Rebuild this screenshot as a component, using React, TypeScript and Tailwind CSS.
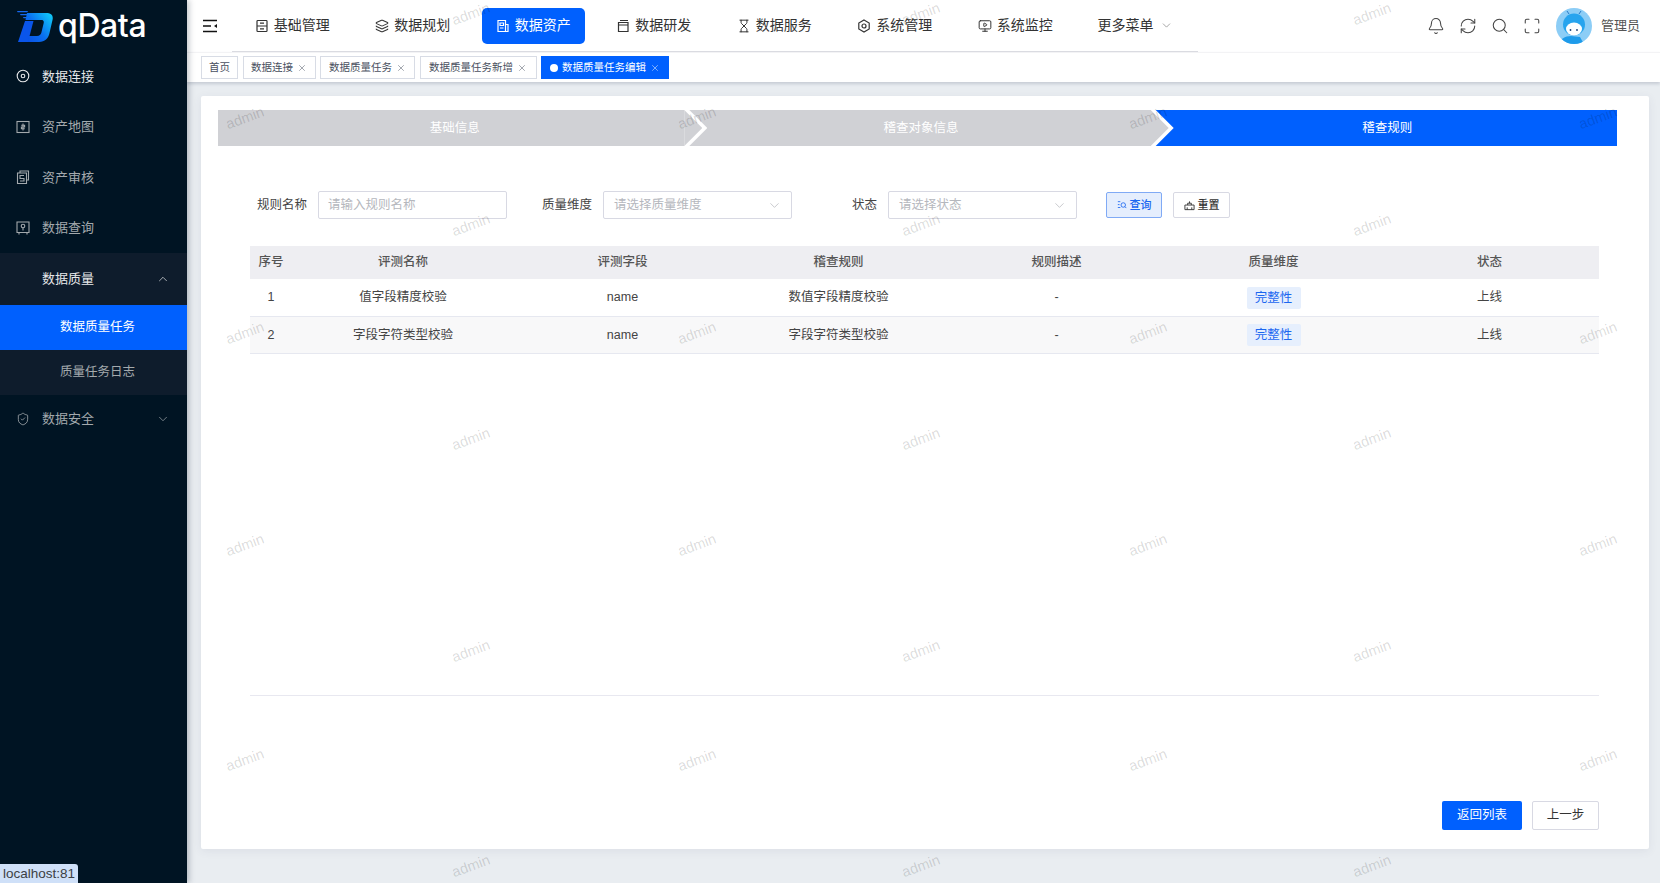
import {
  Bell,
  RefreshCw,
  Search,
  Maximize,
  ChevronDown,
  ChevronUp,
  X,
  Layers,
  Hourglass,
  MonitorPlay,
  ShieldCheck,
} from 'lucide-react';

const font = "font-['Liberation_Sans','Noto_Sans_CJK_SC',sans-serif]";

const navItems = [
  { label: '基础管理', icon: 'base' },
  { label: '数据规划', icon: 'layers' },
  { label: '数据资产', icon: 'doc', active: true },
  { label: '数据研发', icon: 'panel' },
  { label: '数据服务', icon: 'hourglass' },
  { label: '系统管理', icon: 'hexagon' },
  { label: '系统监控', icon: 'monitor' },
];

const tags = [
  { label: '首页', width: 'w-[37px]' },
  { label: '数据连接', width: 'w-[73px]', close: true },
  { label: '数据质量任务', width: 'w-[95px]', close: true },
  { label: '数据质量任务新增', width: 'w-[117px]', close: true },
];

const rows = [
  { id: 1, name: '值字段精度校验', field: 'name', rule: '数值字段精度校验', height: 'h-[38px]' },
  { id: 2, name: '字段字符类型校验', field: 'name', rule: '字段字符类型校验', height: 'h-[37px] bg-[#f8f8f9]' },
];

// watermark centres, staggered
const marks: { x: number; y: number }[] = [];
[118, 333, 545, 760].forEach((y) => [245, 697, 1148, 1598].forEach((x) => marks.push({ x, y })));
[14, 225, 439, 651, 866].forEach((y) => [471, 921, 1372].forEach((x) => marks.push({ x, y })));

function NavIcon({ name }: { name: string }) {
  const cls = 'w-[14px] h-[14px] shrink-0';
  if (name === 'layers') return <Layers className={cls} strokeWidth={1.8} />;
  if (name === 'hourglass') return <Hourglass className={cls} strokeWidth={1.7} />;
  if (name === 'monitor') return <MonitorPlay className={cls} strokeWidth={1.7} />;
  return (
    <svg viewBox="0 0 14 14" fill="none" stroke="currentColor" strokeWidth="1.2" className={cls}>
      {name === 'base' && <rect x="2" y="1.500" width="10" height="11" rx="0.800" />}
      {name === 'base' && <path d="M2 7h10M5 4.200h4M5 9.800h4" />}
      {name === 'doc' && <path d="M2 1.500h7.500v11H2zM9.500 5.500h2.500v7H2M4 4h3.500v2.500H4zM4 9h3.500" />}
      {name === 'panel' && <path d="M2.500 3.500h9.500v9H2.500zM2.500 6h9.500M4 1.500h8" />}
      {name === 'hexagon' && <path d="M7 1l5.200 3v6L7 13l-5.200-3V4z" />}
      {name === 'hexagon' && <circle cx="7" cy="7" r="2" />}
    </svg>
  );
}

function SideIcon({ kind }: { kind: string }) {
  return (
    <svg viewBox="0 0 14 14" fill="none" stroke="currentColor" strokeWidth="1.100" className="w-[14px] h-[14px] shrink-0">
      {kind === 'link' && <circle cx="7" cy="7" r="5.800" />}
      {kind === 'link' && <circle cx="7" cy="7" r="1.800" />}
      {kind === 'map' && <rect x="1" y="1.500" width="12" height="11" />}
      {kind === 'map' && <path d="M7 3.500v7M5.200 5.300h3.400v1.700H5.400v1.800h3.400" />}
      {kind === 'audit' && <path d="M4 3V1h8.500v9H10.500M1.500 3H10.500v10.500H1.500z" />}
      {kind === 'audit' && <path d="M8 5.500H4v3h4v2.500H4" />}
      {kind === 'query' && <path d="M1 1h12v10.500H1zM3 11.500V13.500M11 11.500V13.500" />}
      {kind === 'query' && <circle cx="7" cy="5" r="1.800" />}
      {kind === 'query' && <path d="M7 6.800V9.500" />}
    </svg>
  );
}

function Logo() {
  return (
    <svg viewBox="0 0 36 32" className="w-[36px] h-[32px] shrink-0">
      <defs>
        <linearGradient id="logoFill" x1="0" y1="1" x2="1" y2="0.2">
          <stop offset="0" stopColor="#0a4fe4" />
          <stop offset="0.5" stopColor="#0a6ff0" />
          <stop offset="1" stopColor="#10c4f8" />
        </linearGradient>
      </defs>
      <path d="M0 1h11l-.6 1.300H.6zM3 4h9l-.6 1.300H3.600zM6 7h6l-.6 1.300H6.600z" fill="#1668f0" />
      <path
        d="M10 3h19c5.500 0 7.500 2.500 6.500 7l-3 13c-1.200 5.500-4.500 9-10.500 9H10l2-6h8c2.500 0 3.800-1.200 4.400-3.500l2.200-9c.6-2.500-.2-3.500-2.500-3.500H8.500z"
        fill="url(#logoFill)"
      />
      <path d="M8 11h8.500L11 32H1z" fill="#0a55ea" />
    </svg>
  );
}

function Avatar() {
  return (
    <svg viewBox="0 0 36 36" className="w-[36px] h-[36px] rounded-full shrink-0">
      <rect width="36" height="36" fill="#8ccdf6" />
      <path d="M3 36c1-5 6-8 12-8l9 1 4 7z" fill="#1e9bea" />
      <ellipse cx="18" cy="16.500" rx="11" ry="11" fill="#27a4ee" />
      <ellipse cx="18" cy="21" rx="8" ry="6.500" fill="#fff" />
      <circle cx="14.500" cy="22" r="0.900" fill="#1d3f73" />
      <circle cx="21" cy="22" r="0.900" fill="#1d3f73" />
      <path d="M13 6l-2-3M23 6l2-3" stroke="#1d6fc0" strokeWidth="0.900" fill="none" />
    </svg>
  );
}

function Sidebar() {
  const item = 'flex items-center h-[50.5px] pl-[16px] pr-[17px] text-[13px] text-[#a3a9ad]';
  return (
    <aside className="w-[187px] shrink-0 bg-[#001423] flex flex-col z-20 shadow-[2px_0_6px_rgba(0,21,41,0.25)]">
      <div className="h-[51px] flex items-center pl-[17px] gap-[5px]">
        <Logo />
        <span className="font-['Inter','Liberation_Sans',sans-serif] font-medium text-[32px] tracking-[-0.4px] leading-none text-white">qData</span>
      </div>
      <div className={`${item} gap-[12px] text-[#e6e8ea]`}>
        <SideIcon kind="link" />
        数据连接
      </div>
      <div className={`${item} gap-[12px]`}>
        <SideIcon kind="map" />
        资产地图
      </div>
      <div className={`${item} gap-[12px]`}>
        <SideIcon kind="audit" />
        资产审核
      </div>
      <div className={`${item} gap-[12px]`}>
        <SideIcon kind="query" />
        数据查询
      </div>
      <div className="bg-[#0e1c2c]">
        <div className={`${item} !h-[51.5px] !pl-[42px] justify-between text-[#e6e8ea]`}>
          数据质量
          <ChevronUp className="w-[14px] h-[14px]" strokeWidth={1.2} />
        </div>
        <div className="h-[45px] flex items-center pl-[60px] bg-[#0060fe] text-white text-[12.500px]">数据质量任务</div>
        <div className="h-[45px] flex items-center pl-[60px] text-[#a3a9ad] text-[12.500px]">质量任务日志</div>
      </div>
      <div className={`${item} !h-[48.5px] gap-[12px] justify-start`}>
        <ShieldCheck className="w-[14px] h-[14px] shrink-0" strokeWidth={1.4} />
        数据安全
        <ChevronDown className="w-[14px] h-[14px] ml-auto" strokeWidth={1.2} />
      </div>
    </aside>
  );
}

function Header() {
  return (
    <header className="h-[52px] bg-white flex items-center pl-[16px] pr-[20px] shrink-0">
      <svg viewBox="0 0 14 14" fill="none" stroke="#111" strokeWidth="1.300" className="w-[14px] h-[14px] shrink-0">
        <path d="M0 1.500h14M0 7h8M0 12.500h14" />
        <path d="M14 5L11 7l3 2z" fill="#111" stroke="none" />
      </svg>
      <nav className="ml-[15px] w-[966px] h-[52px] flex items-center border-b border-[#dcdde2] text-[14px] text-[#333]">
        {navItems.map((nav) => (
          <div key={nav.label} className="w-[120.5px] flex justify-center">
            <div
              className={
                nav.active
                  ? 'flex items-center justify-center gap-[5px] h-[36px] w-[103px] rounded-[5px] bg-[#0060fe] text-white'
                  : 'flex items-center justify-center gap-[5px] h-[36px]'
              }
            >
              <NavIcon name={nav.icon} />
              {nav.label}
            </div>
          </div>
        ))}
        <div className="flex items-center gap-[6px] ml-[22px]">
          更多菜单
          <ChevronDown className="w-[13px] h-[13px] text-[#777]" strokeWidth={1.2} />
        </div>
      </nav>
      <div className="ml-auto flex items-center text-[#444]">
        <div className="flex items-center gap-[14px]">
          <Bell className="w-[18px] h-[18px]" strokeWidth={1.4} />
          <RefreshCw className="w-[18px] h-[18px]" strokeWidth={1.4} />
          <Search className="w-[18px] h-[18px]" strokeWidth={1.4} />
          <Maximize className="w-[18px] h-[18px]" strokeWidth={1.4} />
        </div>
        <div className="ml-[15px]">
          <Avatar />
        </div>
        <span className="ml-[9px] text-[13px] text-[#555]">管理员</span>
      </div>
    </header>
  );
}

function TagsBar() {
  return (
    <div className="h-[30px] bg-white shrink-0 flex items-center pl-[14px] gap-[4.500px] shadow-[0_2px_3px_rgba(60,70,100,0.2)] z-10 border-t border-[#f3f3f5]">
      {tags.map((tag) => (
        <div
          key={tag.label}
          className={`${tag.width} h-[23px] border border-[#d8dce5] text-[10.500px] text-[#495060] flex items-center justify-center gap-[4px]`}
        >
          {tag.label}
          {tag.close && <X className="w-[10px] h-[10px]" strokeWidth={1.200} />}
        </div>
      ))}
      <div className="w-[128px] h-[23px] bg-[#0060fe] text-white text-[10.500px] flex items-center justify-center gap-[4px]">
        <span className="w-[8px] h-[8px] rounded-full bg-white" />
        数据质量任务编辑
        <X className="w-[10px] h-[10px]" strokeWidth={1.200} />
      </div>
    </div>
  );
}

function Steps() {
  const names = ['基础信息', '稽查对象信息', '稽查规则'];
  return (
    <div className="flex h-[36px] text-[12.500px] text-white">
      {names.map((name, i) => (
        <div
          key={name}
          className={`relative flex-1 flex items-center justify-center pl-[7px] ${i === 2 ? 'bg-[#0060fe]' : 'bg-[#d0d1d5]'}`}
        >
          {name}
          {i < 2 && (
            <>
              <span className="absolute z-10 top-0 -right-[23px] w-[23px] h-[36px] bg-white [clip-path:polygon(0_0,5px_0,100%_50%,5px_100%,0_100%)]" />
              <span className="absolute z-20 top-0 -right-[18px] w-[18px] h-[36px] bg-[#d0d1d5] [clip-path:polygon(0_0,100%_50%,0_100%)]" />
            </>
          )}
        </div>
      ))}
    </div>
  );
}

function SelectBox({ placeholder }: { placeholder: string }) {
  return (
    <div className="w-[189px] h-[28px] border border-[#d8d9e3] rounded-[2px] flex items-center justify-between pl-[10px] pr-[9px] text-[12.500px] text-[#b5b7bd]">
      {placeholder}
      <ChevronDown className="w-[15px] h-[15px] text-[#b0b2b8]" strokeWidth={1.100} />
    </div>
  );
}

function FilterBar() {
  return (
    <div className="flex items-center mt-[45px] ml-[56px] h-[28px] text-[12.500px] text-[#444]">
      <span className="w-[50px] mr-[11px]">规则名称</span>
      <div className="w-[189px] h-[28px] border border-[#d8d9e3] rounded-[2px] flex items-center pl-[9px] text-[#b5b7bd]">请输入规则名称</div>
      <span className="ml-[35px] mr-[11px]">质量维度</span>
      <SelectBox placeholder="请选择质量维度" />
      <span className="ml-[60px] mr-[11px]">状态</span>
      <SelectBox placeholder="请选择状态" />
      <button className="ml-[29px] w-[56px] h-[26px] rounded-[2px] border border-[#80aaf5] bg-[#e5eefd] text-[#1a66f0] text-[11px] font-medium flex items-center justify-center gap-[3px]">
        <svg viewBox="0 0 12 12" fill="none" stroke="currentColor" strokeWidth="1" className="w-[10px] h-[10px]">
          <path d="M1 2h3M1 5.500h2M1 9h3" />
          <circle cx="7.500" cy="6" r="2.700" />
          <path d="M9.500 8l1.700 1.700" />
        </svg>
        查询
      </button>
      <button className="ml-[11px] w-[57px] h-[26px] rounded-[2px] border border-[#d8d9e3] text-[#333] text-[11px] font-medium flex items-center justify-center gap-[3px]">
        <svg viewBox="0 0 12 12" fill="none" stroke="currentColor" strokeWidth="1" className="w-[11px] h-[11px]">
          <path d="M1 10.500h10V5.500H1zM4 5.500V3.500h4v2M6 3.500V1.500M3.500 10.500V8M8.500 10.500V8" />
        </svg>
        重置
      </button>
    </div>
  );
}

function RulesTable() {
  const grid = 'grid grid-cols-[42px_222px_217px_215px_221px_213px_1fr] items-center text-center';
  return (
    <div className="mt-[27px] ml-[49px] mr-[50px] text-[12.500px]">
      <div className={`${grid} h-[33px] bg-[#eeeef2] text-[#555] font-medium`}>
        <span>序号</span>
        <span>评测名称</span>
        <span>评测字段</span>
        <span>稽查规则</span>
        <span>规则描述</span>
        <span>质量维度</span>
        <span>状态</span>
      </div>
      {rows.map((row) => (
        <div key={row.id} className={`${grid} ${row.height} border-b border-[#e6e8f0] text-[#444]`}>
          <span>{row.id}</span>
          <span>{row.name}</span>
          <span>{row.field}</span>
          <span>{row.rule}</span>
          <span>-</span>
          <span className="flex justify-center">
            <span className="w-[54px] h-[22px] leading-[22px] rounded-[2px] bg-[#e6effd] text-[#1a66f0]">完整性</span>
          </span>
          <span>上线</span>
        </div>
      ))}
    </div>
  );
}

export default function App() {
  return (
    <div className={`${font} relative flex w-[1660px] h-[883px] overflow-hidden bg-[#e9edf1]`}>
      <Sidebar />
      <main className="flex-1 flex flex-col min-w-0">
        <Header />
        <TagsBar />
        <div className="flex-1 pl-[14px] pr-[11px] pt-[14px] pb-[34px]">
          <div className="relative h-full bg-white rounded-[2px] shadow-[0_2px_10px_rgba(60,70,100,0.08)] flex flex-col pt-[14px]">
            <div className="ml-[17px] mr-[32px]">
              <Steps />
            </div>
            <FilterBar />
            <RulesTable />
            <div className="mt-auto ml-[49px] mr-[50px] pb-[19px] flex flex-col">
              <div className="border-t border-[#e8e8f0]" />
              <div className="mt-[105px] flex justify-end gap-[10px] text-[12.500px]">
                <button className="w-[80px] h-[29px] bg-[#0060fe] text-white rounded-[2px]">返回列表</button>
                <button className="w-[67px] h-[29px] border border-[#d8d9e3] text-[#333] rounded-[2px]">上一步</button>
              </div>
            </div>
          </div>
        </div>
      </main>
      <div className="absolute left-0 bottom-0 z-30 w-[78px] h-[19px] rounded-tr-[3px] bg-[#cfe0f8] text-[13.500px] leading-[19px] pl-[3px] text-[#3c4043]">localhost:81</div>
      <div className="absolute inset-0 z-20 pointer-events-none overflow-hidden font-['Liberation_Sans',sans-serif]">
        {marks.map((m) => (
          <span
            key={`${m.x}-${m.y}`}
            className="absolute -translate-x-1/2 -translate-y-1/2 -rotate-[20deg] text-[14.500px] leading-none text-black/15"
            style={{ left: m.x, top: m.y }}
          >
            admin
          </span>
        ))}
      </div>
    </div>
  );
}
